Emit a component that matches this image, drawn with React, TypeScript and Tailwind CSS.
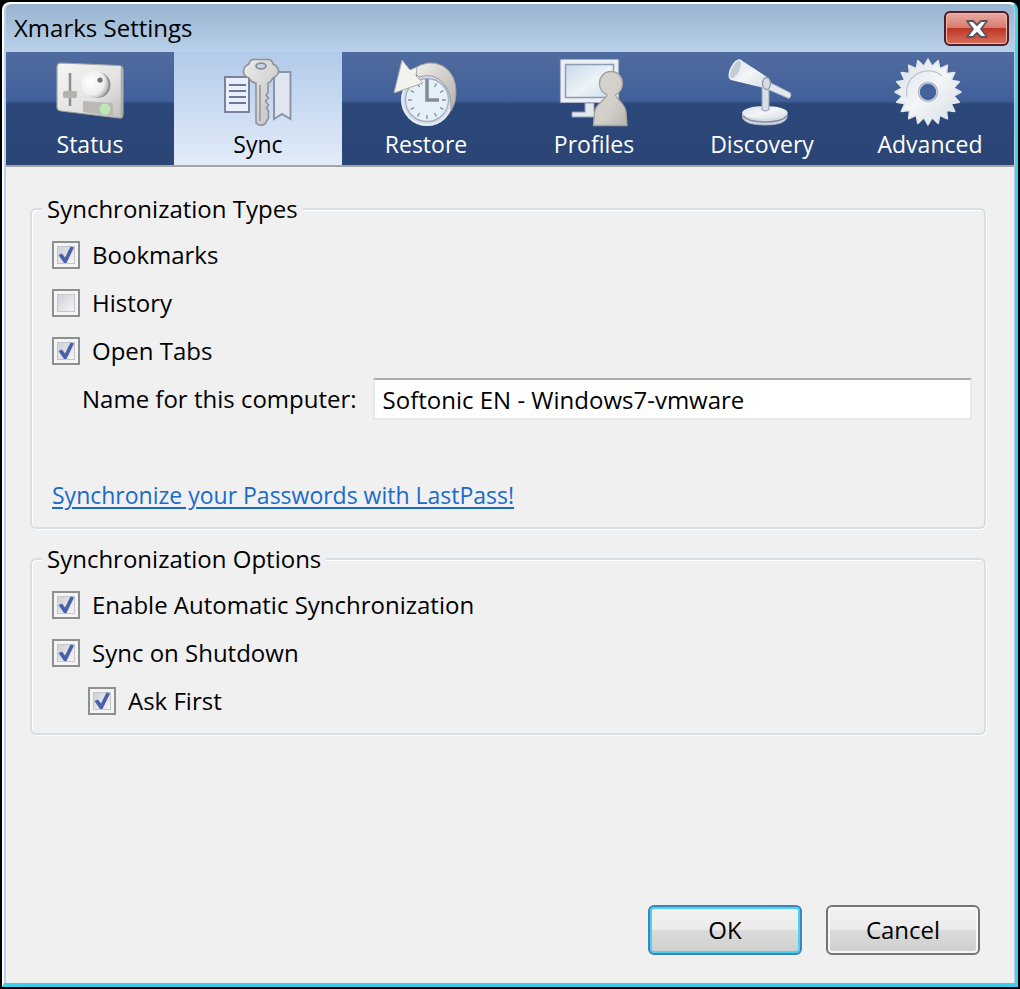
import { useState } from "react";
import type { ReactNode } from "react";
import clsx from "clsx";

function TabIcon({ children }: { children: ReactNode }) {
  return (
    <svg viewBox="0 0 72 70" className="h-[70px] w-[72px]" aria-hidden="true">
      {children}
    </svg>
  );
}

function Gradients() {
  return (
    <svg width="0" height="0" className="absolute" aria-hidden="true">
      <defs>
        <linearGradient id="plate" x1="0" y1="0" x2="1" y2="1">
          <stop offset="0" stopColor="#f6f6f4" />
          <stop offset="0.6" stopColor="#e2e2e0" />
          <stop offset="1" stopColor="#bdbdbb" />
        </linearGradient>
        <radialGradient id="knob" cx="0.35" cy="0.4" r="0.7">
          <stop offset="0" stopColor="#ffffff" />
          <stop offset="0.7" stopColor="#eeeeee" />
          <stop offset="1" stopColor="#a8a8a8" />
        </radialGradient>
        <linearGradient id="metal" x1="0" y1="0" x2="1" y2="1">
          <stop offset="0" stopColor="#ececec" />
          <stop offset="1" stopColor="#bfc0c2" />
        </linearGradient>
        <linearGradient id="arc" x1="0" y1="0" x2="1" y2="1">
          <stop offset="0" stopColor="#f4f3f0" />
          <stop offset="0.5" stopColor="#d2cfcb" />
          <stop offset="1" stopColor="#b3b1b0" />
        </linearGradient>
        <linearGradient id="person" x1="0" y1="0" x2="1" y2="1">
          <stop offset="0" stopColor="#d8d5d1" />
          <stop offset="0.6" stopColor="#d2cfca" />
          <stop offset="1" stopColor="#b9b6b1" />
        </linearGradient>
        <linearGradient id="screen" x1="0" y1="0" x2="1" y2="1">
          <stop offset="0" stopColor="#c8d8e8" />
          <stop offset="0.55" stopColor="#edf4f9" />
          <stop offset="1" stopColor="#cddcea" />
        </linearGradient>
        <linearGradient id="steel" x1="0" y1="0" x2="1" y2="1">
          <stop offset="0" stopColor="#d9dfe6" />
          <stop offset="0.5" stopColor="#f4f6f8" />
          <stop offset="1" stopColor="#d3dbe4" />
        </linearGradient>
      </defs>
    </svg>
  );
}

function StatusIcon() {
  return (
    <TabIcon>
      <path d="M7 6 L65 8.500 Q69 9 69 13 L69 57 Q69 61.500 65 61 L7 54 Q3 53.500 3 50 L3 10 Q3 6 7 6Z" fill="url(#plate)" stroke="#a3a39f" strokeWidth="1.200" />
      <path d="M67.500 11 V59" stroke="#aaa9a5" strokeWidth="1.500" />
      <path d="M16 16 V49" stroke="#8f8f8f" strokeWidth="2.500" />
      <rect x="9" y="34" width="14" height="7" rx="2" fill="#b3b2af" />
      <circle cx="43.500" cy="28" r="13" fill="#909090" />
      <circle cx="41" cy="27.500" r="13.500" fill="url(#knob)" />
      <circle cx="46" cy="23" r="2.600" fill="#6d7178" />
      <path d="M29 44 L59 46 V59 L29 55Z" fill="#bab9b5" />
      <circle cx="51" cy="52" r="5.500" fill="#bfe6b4" />
    </TabIcon>
  );
}

function SyncIcon() {
  return (
    <TabIcon>
      <rect x="3" y="20" width="24" height="35" fill="#eaf0f9" stroke="#7982a3" strokeWidth="2" />
      <path d="M7 28 H24 M7 34 H24 M7 40 H24 M7 46 H24" stroke="#6f7899" strokeWidth="1.800" />
      <path d="M52 15 H68.500 V62 L60 57 L52 62Z" fill="#e0e6f0" stroke="#8b93ac" strokeWidth="2" />
      <path
        d="M31 2.500 H47 Q50 3 51 7 Q57 10 56.500 15 Q56 19 51 21 Q48 26 46 26 V36 L44 38 L46.500 41 L43.500 44 L46.500 48 L44.500 51 L46.500 54 V61 L43 67 Q38 70 34 66 V26 Q30 26 27 21 Q21 19 21.500 14 Q22 9 27 7 Q28 3 31 2.500Z"
        fill="url(#metal)"
        stroke="#8f9094"
        strokeWidth="1.500"
      />
      <path d="M38 28 V64" stroke="#9d9ea1" strokeWidth="1.800" />
      <ellipse cx="39" cy="9" rx="5" ry="2.800" fill="#c3d6ee" stroke="#8b8d93" strokeWidth="1.800" />
    </TabIcon>
  );
}

function RestoreIcon() {
  const ticks = Array.from({ length: 12 }, (_, i) => i * 30);
  return (
    <TabIcon>
      <circle cx="37" cy="43" r="25" fill="#d3ddea" stroke="#e8edf3" strokeWidth="2" />
      <circle cx="37" cy="43" r="21.500" fill="#e6f0f8" stroke="#a3b0c4" strokeWidth="1.300" />
      {ticks.map((deg) => (
        <path key={deg} d="M37 24 V28" stroke="#7a879b" strokeWidth="1.300" transform={`rotate(${deg} 37 43)`} />
      ))}
      <path d="M22 13 Q38 1 53 9 Q67 18 66 37 Q66 46 61 54 Q62 37 54 27 Q44 15 29 20Z" fill="url(#arc)" stroke="#9a9a9c" strokeWidth="1" />
      <path d="M12 3 L20 13 L27 10 L26 19 L33 26 L4 36Z" fill="#f2f2ee" stroke="#aaa9a5" strokeWidth="1" />
      <path d="M37 22 V43 H49" fill="none" stroke="#858b94" strokeWidth="3.500" />
    </TabIcon>
  );
}

function ProfilesIcon() {
  return (
    <TabIcon>
      <rect x="2.500" y="2.500" width="58" height="43" rx="1" fill="#eceff3" stroke="#a7b3c6" strokeWidth="1.200" />
      <rect x="7.500" y="7.500" width="48" height="33" fill="url(#screen)" stroke="#8a9bb5" strokeWidth="1.500" />
      <path d="M27 46 H36 V55 H40 V60 H14 V55 H27Z" fill="#e4e9ef" stroke="#8b9ab5" strokeWidth="1" />
      <path
        d="M53 14.500 C60 14.500 64.500 20 64.500 26.500 C64.500 32 61 36 57.500 38 C58 42 67 46 68 55 L69 68.500 H35.500 L36.500 55 C38 46 48.500 42 49 38 C45 36 41.500 32 41.500 26.500 C41.500 20 46 14.500 53 14.500Z"
        fill="url(#person)"
        stroke="#a5a29e"
        strokeWidth="1.300"
      />
    </TabIcon>
  );
}

function DiscoveryIcon() {
  return (
    <TabIcon>
      <path d="M16.500 55 V61 Q20 68 39 68 Q58 68 61 61 V55Z" fill="#d3dae2" stroke="#a9b2bf" strokeWidth="1" />
      <ellipse cx="39" cy="55.500" rx="22.500" ry="6.500" fill="url(#steel)" />
      <path d="M17 59 Q22 65 39 65 Q56 65 61 59" fill="none" stroke="#838ea1" strokeWidth="1.500" />
      <path d="M36 28 H43 V53 Q39 55 36 53Z" fill="#d9dfe7" stroke="#949fb2" strokeWidth="1" />
      <path d="M43 25 L64.500 36 Q66 39 63 41.500 L41 32Z" fill="#e3e8ee" stroke="#a8b1bf" strokeWidth="1" />
      <path d="M15 3 L41 20 L44 29 L38 31 L5 23 Q1 20 5 11 Q10 2 15 3Z" fill="url(#steel)" />
      <ellipse cx="9.500" cy="12.500" rx="4.500" ry="10.500" transform="rotate(27 9.500 12.500)" fill="#c5ccd6" stroke="#e9edf1" strokeWidth="1.500" />
      <ellipse cx="40.500" cy="26.500" rx="4" ry="6" fill="#d6dce4" stroke="#8f99ab" strokeWidth="1.300" />
    </TabIcon>
  );
}

// 20 teeth, outer and inner radius in turn
const gearPoints = Array.from({ length: 40 }, (_, i) => {
  const r = i % 2 === 0 ? 33 : 26;
  const angle = (i * 9 * Math.PI) / 180;
  return `${(34 + r * Math.sin(angle)).toFixed(1)} ${(35 - r * Math.cos(angle)).toFixed(1)}`;
});

function AdvancedIcon() {
  return (
    <TabIcon>
      <path
        d={`M${gearPoints.join("L")}Z M34 26 A9 9 0 1 0 34 44 A9 9 0 1 0 34 26Z`}
        fill="url(#steel)"
        fillRule="evenodd"
        stroke="#e3e8ed"
        strokeWidth="1.500"
        strokeLinejoin="round"
      />
      <path d="M13 40 A21.500 21.500 0 0 1 48 19" fill="none" stroke="#bcc5cf" strokeWidth="1.200" />
      <circle cx="34" cy="35" r="9.500" fill="none" stroke="#a8b2c0" strokeWidth="1.300" />
    </TabIcon>
  );
}

const TABS = [
  { name: "Status", icon: <StatusIcon /> },
  { name: "Sync", icon: <SyncIcon /> },
  { name: "Restore", icon: <RestoreIcon /> },
  { name: "Profiles", icon: <ProfilesIcon /> },
  { name: "Discovery", icon: <DiscoveryIcon /> },
  { name: "Advanced", icon: <AdvancedIcon /> },
];

function CheckRow({
  label,
  defaultChecked = false,
  className,
}: {
  label: string;
  defaultChecked?: boolean;
  className?: string;
}) {
  return (
    <label className={clsx("flex h-12 items-center gap-3", className)}>
      <span className="relative size-7 shrink-0">
        <input
          type="checkbox"
          defaultChecked={defaultChecked}
          className="peer block size-7 appearance-none border-2 border-[#8e8f8f] bg-[#f4f4f4]"
        />
        <span className="pointer-events-none absolute inset-[5px] border border-[#c3c7cc] bg-linear-to-br from-[#cdd0d5] to-[#f6f6f6]" />
        <svg
          viewBox="0 0 28 28"
          className="pointer-events-none absolute inset-0 hidden size-7 peer-checked:block"
          aria-hidden="true"
        >
          <path d="M6.500 14 L10 12.500 L13 16.500 L18.500 5.500 L22 6.500 L14.500 22 L12 22Z" fill="#4a60aa" />
        </svg>
      </span>
      <span>{label}</span>
    </label>
  );
}

function Group({ title, children }: { title: string; children: ReactNode }) {
  return (
    <fieldset className="min-w-0 rounded-md border-2 border-[#d5dfe5] pr-3 pb-2 pl-5 shadow-[1px_1px_0_#fff,inset_1px_1px_0_#fff]">
      <legend className="-ml-2.5 bg-[#f0f0f0] px-[5px] leading-[30px]">{title}</legend>
      <div className="pt-[7px]">{children}</div>
    </fieldset>
  );
}

export default function App() {
  const [tab, setTab] = useState("Sync");

  return (
    <div className="flex min-h-screen flex-col bg-black p-0.5 font-['Open_Sans',sans-serif] text-[24px] text-black">
      <Gradients />
      <div className="flex flex-1 flex-col rounded-t-lg border-t-2 border-r-3 border-b-4 border-l-2 border-t-white border-r-[#45d0ea] border-b-[#3fcde8] border-l-white bg-[#b9d1ea] pr-px pl-0.5">
        <header className="flex h-12 items-start justify-between rounded-t-md bg-linear-to-b from-[#99b4d1] to-[#b9d1ea] pr-[5px] pl-2">
          <h1 className="leading-[48px]">Xmarks Settings</h1>
          <button
            aria-label="Close"
            className="mt-[7px] grid h-[35px] w-[65px] place-items-center rounded-md border-2 border-[#4f1c28] bg-[linear-gradient(#eaa99f_0%,#d67c6e_48%,#bd3524_50%,#d8705a_100%)] shadow-[inset_0_0_0_1px_#f0b9ae]"
          >
            <svg viewBox="0 0 24 20" className="h-5 w-6" aria-hidden="true">
              <path
                d="M2 2 H8 L12 6 L16 2 H22 L16 10 L22 18 H16 L12 14 L8 18 H2 L8 10Z"
                fill="#fff"
                stroke="#5b5562"
                strokeWidth="1.800"
                strokeLinejoin="round"
              />
            </svg>
          </button>
        </header>

        <nav
          role="tablist"
          className="flex h-[115px] border-b-2 border-[#a5a5a5] bg-[linear-gradient(#506b9f_0%,#41609a_43%,#2c4779_46%,#2a4576_100%)] text-[23px]"
        >
          {TABS.map(({ name, icon }) => (
            <button
              key={name}
              role="tab"
              aria-selected={tab === name}
              onClick={() => setTab(name)}
              className={clsx(
                "flex flex-1 basis-0 flex-col items-center pt-[5px]",
                tab === name ? "bg-linear-to-b from-[#b2cbea] to-[#e3ecf9]" : "text-white"
              )}
            >
              {icon}
              <span className="leading-[34px]">{name}</span>
            </button>
          ))}
        </nav>

        <main className="flex flex-1 flex-col bg-[#f0f0f0] pt-[27px] pr-7 pb-7 pl-6">
          <div className="flex flex-col gap-[15px]">
            <Group title="Synchronization Types">
              <CheckRow label="Bookmarks" defaultChecked />
              <CheckRow label="History" />
              <CheckRow label="Open Tabs" defaultChecked />
              <div className="flex h-12 items-center gap-4 pl-[30px]">
                <label htmlFor="computer-name" className="shrink-0">
                  Name for this computer:
                </label>
                <input
                  id="computer-name"
                  type="text"
                  defaultValue="Softonic EN - Windows7-vmware"
                  className="h-[42px] min-w-0 flex-1 border-2 border-[#e3e9ef] border-t-[#abadb3] bg-white px-2 outline-none"
                />
              </div>
              <div className="mt-12 flex h-12 items-center">
                <a href="#lastpass" className="text-[23px] text-[#1a6acb] underline decoration-2 underline-offset-3">
                  Synchronize your Passwords with LastPass!
                </a>
              </div>
            </Group>

            <Group title="Synchronization Options">
              <CheckRow label="Enable Automatic Synchronization" defaultChecked />
              <CheckRow label="Sync on Shutdown" defaultChecked />
              <CheckRow label="Ask First" defaultChecked className="pl-9" />
            </Group>
          </div>

          <div className="mt-auto flex justify-end gap-6 pr-1.5">
            <button className="h-[50px] w-[154px] rounded-md border-2 border-[#3c87b5] bg-[linear-gradient(#f2f2f2_0%,#ebebeb_48%,#dadada_52%,#cfcfcf_100%)] shadow-[inset_0_0_0_2px_#4fd0f2]">
              OK
            </button>
            <button className="h-[50px] w-[154px] rounded-md border-2 border-[#757575] bg-[linear-gradient(#f2f2f2_0%,#ebebeb_48%,#dadada_52%,#cfcfcf_100%)] shadow-[inset_0_0_0_2px_#f7f7f7]">
              Cancel
            </button>
          </div>
        </main>
      </div>
    </div>
  );
}
